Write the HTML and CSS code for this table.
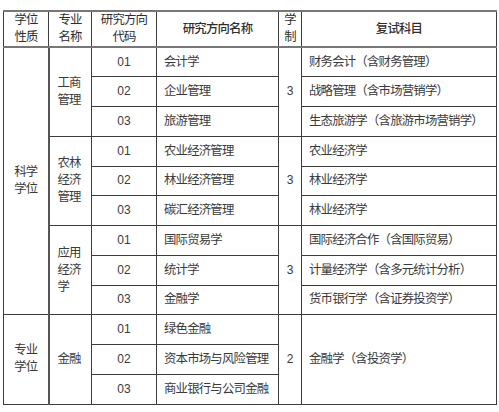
FILE: index.html
```html
<!DOCTYPE html>
<html lang="zh">
<head>
<meta charset="utf-8">
<link rel="stylesheet" href="styles.css">
</head>
<body>
<table class="plan">
  <colgroup>
    <col class="c-type"><col class="c-major"><col class="c-code"><col class="c-name"><col class="c-years"><col class="c-exam">
  </colgroup>
  <thead>
    <tr class="head">
      <th>学位<br>性质</th>
      <th>专业<br>名称</th>
      <th>研究方向<br>代码</th>
      <th class="strong">研究方向名称</th>
      <th>学<br>制</th>
      <th class="strong">复试科目</th>
    </tr>
  </thead>
  <tbody>
    <tr>
      <td class="type" rowspan="9">科学<br>学位</td>
      <td class="major" rowspan="3">工商<br>管理</td>
      <td class="code">01</td>
      <td class="name">会计学</td>
      <td class="years" rowspan="3">3</td>
      <td class="exam">财务会计（含财务管理）</td>
    </tr>
    <tr>
      <td class="code">02</td>
      <td class="name">企业管理</td>
      <td class="exam">战略管理（含市场营销学）</td>
    </tr>
    <tr>
      <td class="code">03</td>
      <td class="name">旅游管理</td>
      <td class="exam">生态旅游学（含旅游市场营销学）</td>
    </tr>
    <tr>
      <td class="major" rowspan="3">农林<br>经济<br>管理</td>
      <td class="code">01</td>
      <td class="name">农业经济管理</td>
      <td class="years" rowspan="3">3</td>
      <td class="exam">农业经济学</td>
    </tr>
    <tr>
      <td class="code">02</td>
      <td class="name">林业经济管理</td>
      <td class="exam">林业经济学</td>
    </tr>
    <tr>
      <td class="code">03</td>
      <td class="name">碳汇经济管理</td>
      <td class="exam">林业经济学</td>
    </tr>
    <tr>
      <td class="major" rowspan="3">应用<br>经济<br>学</td>
      <td class="code">01</td>
      <td class="name">国际贸易学</td>
      <td class="years" rowspan="3">3</td>
      <td class="exam">国际经济合作（含国际贸易）</td>
    </tr>
    <tr>
      <td class="code">02</td>
      <td class="name">统计学</td>
      <td class="exam">计量经济学（含多元统计分析）</td>
    </tr>
    <tr>
      <td class="code">03</td>
      <td class="name">金融学</td>
      <td class="exam">货币银行学（含证券投资学）</td>
    </tr>
    <tr>
      <td class="type" rowspan="3">专业<br>学位</td>
      <td class="major" rowspan="3">金融</td>
      <td class="code">01</td>
      <td class="name">绿色金融</td>
      <td class="years" rowspan="3">2</td>
      <td class="exam" rowspan="3">金融学（含投资学）</td>
    </tr>
    <tr>
      <td class="code">02</td>
      <td class="name">资本市场与风险管理</td>
    </tr>
    <tr>
      <td class="code">03</td>
      <td class="name">商业银行与公司金融</td>
    </tr>
  </tbody>
</table>
</body>
</html>
```
FILE: styles.css
```css
html, body {
  margin: 0;
  padding: 0;
  background: #ffffff;
}

body {
  padding: 10px 0 0 3px;
  font-family: "Liberation Sans", "Noto Sans CJK SC", sans-serif;
  color: #3a3a3a;
}

.plan {
  border-collapse: collapse;
  table-layout: fixed;
  width: 493px;
  font-size: 12.4px;
  letter-spacing: -0.8px;
  text-spacing-trim: space-all;
}

.c-type { width: 45px; }
.c-major { width: 43px; }
.c-code { width: 65px; }
.c-name { width: 122px; }
.c-years { width: 23px; }
.c-exam { width: 195px; }

.plan th,
.plan td {
  border: 1px solid #3c3c3c;
  padding: 0;
  line-height: 17px;
  vertical-align: middle;
}

.plan th {
  font-weight: normal;
  color: #2e2e2e;
  text-align: center;
  border-top: 2px solid #777;
  border-bottom: 2px solid #777;
}

.plan th.strong {
  font-weight: 500;
}

.head {
  height: 35px;
}

.plan tbody tr {
  height: 29.75px;
}

.type {
  text-align: center;
  border-right: 2px solid #555 !important;
}

.major {
  text-align: left;
  padding-left: 8px !important;
}

.code,
.years {
  text-align: center;
  font-size: 12px;
  letter-spacing: 0;
}

.name,
.exam {
  text-align: left;
  padding-left: 7px !important;
}
```
